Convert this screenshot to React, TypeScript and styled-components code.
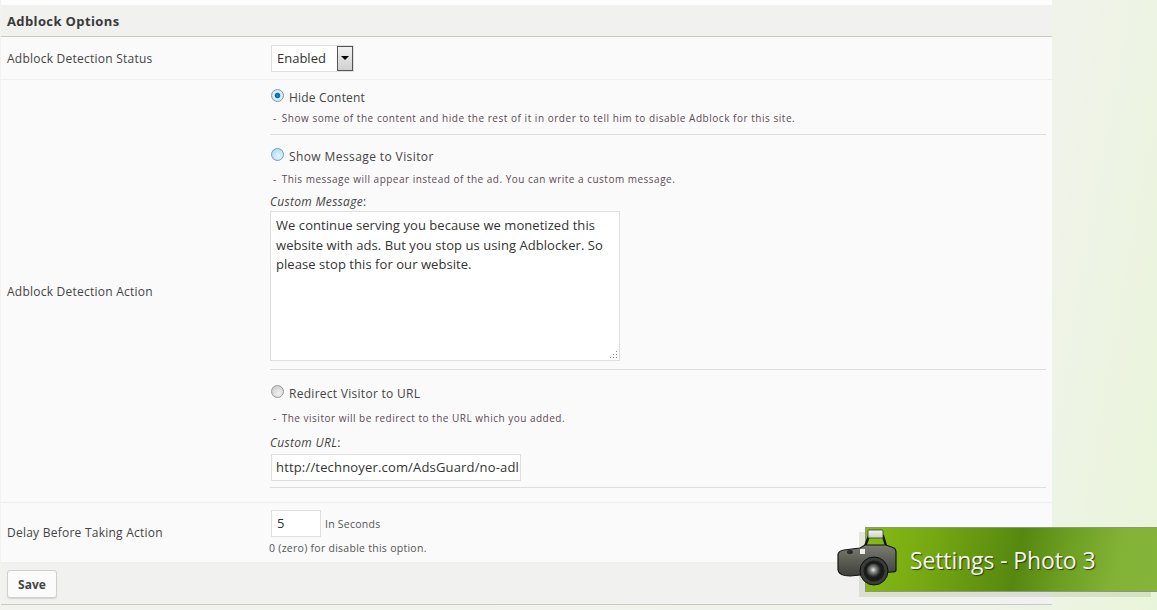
import React from "react";
import styled, { createGlobalStyle } from "styled-components";

const GlobalStyle = createGlobalStyle`
    html, body {
        margin: 0;
        height: 100%;
        overflow: hidden;
    }

    body {
        font-family: "Open Sans", "Noto Sans", sans-serif;
        font-size: 12px;
        color: #333;
        background: linear-gradient(100deg, #f2f3ef 0%, #f0f3ea 85%, #e9f5da 100%);
    }
`;

const Page = styled.div`
    position: relative;
    height: 610px;
    overflow: hidden;
`;

const Panel = styled.div`
    width: 1051px;
    margin-left: 1px;
    padding-top: 5px;
    background: linear-gradient(#fdfdfd, #fdfdfd) top / 100% 5px no-repeat;
`;

const Heading = styled.h3`
    margin: 0;
    height: 32px;
    box-sizing: border-box;
    padding: 1px 6px 0;
    font-size: 13px;
    line-height: 30px;
    font-weight: 700;
    letter-spacing: 0.38px;
    color: #3a3a3a;
    background: #f1f1ef;
    border-bottom: 1px solid #c9c9c5;
`;

const Row = styled.div<{ $height: number }>`
    display: grid;
    grid-template-columns: 269px 1fr;
    height: ${(p) => p.$height}px;
    box-sizing: border-box;
    background: #fafafa;
    border-bottom: 1px solid #efefef;
`;

const RowLabel = styled.div`
    display: flex;
    align-items: center;
    padding-left: 6px;
    font-size: 12px;
    letter-spacing: 0.24px;
    color: #444;
`;

const RowBody = styled.div`
    padding-right: 6px;
`;

const CenterBody = styled(RowBody)`
    display: flex;
    align-items: center;
`;

const Select = styled.div`
    display: flex;
    align-items: center;
    width: 83px;
    height: 27px;
    margin-left: 1px;
    box-sizing: border-box;
    border: 1px solid #dfdfdf;
    background: #fff;
    font-size: 13px;
    color: #333;
`;

const SelectText = styled.span`
    flex: 1;
    padding-left: 5px;
`;

const SelectArrow = styled.span`
    display: flex;
    align-items: center;
    justify-content: center;
    width: 16px;
    height: 25px;
    box-sizing: border-box;
    border: 1px solid #555;
    background: linear-gradient(#f2f2f2, #cfcfcf);

    &::after {
        content: "";
        border: 4px solid transparent;
        border-top: 4px solid #000;
        border-bottom: 0;
    }
`;

const OptionBlock = styled.div<{ $height: number; $line?: boolean }>`
    height: ${(p) => p.$height}px;
    box-sizing: border-box;
    border-bottom: ${(p) => (p.$line ? "1px solid #dedede" : "0")};
`;

const RadioLine = styled.div<{ $top: number; $spacing: number }>`
    display: flex;
    align-items: center;
    gap: 5px;
    padding-top: ${(p) => p.$top}px;
    padding-left: 1px;
    height: 18px;
    font-size: 12px;
    letter-spacing: ${(p) => p.$spacing}px;
    color: #444;
`;

const RadioDot = styled.span<{ $tone: "on" | "blue" | "grey" }>`
    display: block;
    width: 13px;
    height: 13px;
    margin-top: -3px;
    border-radius: 50%;
    box-sizing: border-box;
    border: 1px solid ${(p) => (p.$tone === "grey" ? "#9a9a9a" : "#6f9fbd")};
    background: ${(p) =>
        p.$tone === "on"
            ? "radial-gradient(circle, #0a8fe0 0, #0468a8 28%, #e6f2f9 42%, #bcd9ea 100%)"
            : p.$tone === "blue"
              ? "radial-gradient(circle at 60% 65%, #e6f5fd 0, #b5def5 70%, #8fc4e2 100%)"
              : "radial-gradient(circle at 60% 65%, #f2f2f2 0, #d2d2d2 70%, #b0b0b0 100%)"};
`;

const Hint = styled.div<{ $top: number; $spacing: number }>`
    display: flex;
    gap: 5px;
    margin-top: ${(p) => p.$top}px;
    padding-left: 3px;
    font-size: 10px;
    line-height: 14px;
    letter-spacing: ${(p) => p.$spacing}px;
    color: #5b4a55;
`;

const FieldLabel = styled.div<{ $top: number }>`
    margin-top: ${(p) => p.$top}px;
    font-size: 12px;
    line-height: 16px;
    letter-spacing: 0.3px;
    color: #444;

    em {
        font-style: italic;
    }
`;

const TextArea = styled.div`
    position: relative;
    width: 350px;
    height: 150px;
    margin-top: 1px;
    box-sizing: border-box;
    padding: 4px 5px;
    border: 1px solid #dfdfdf;
    background: #fff;
    font-size: 13px;
    line-height: 19.5px;
    letter-spacing: 0.06px;
    color: #333;
`;

const Grip = styled.svg`
    position: absolute;
    right: 1px;
    bottom: 1px;
`;

const UrlInput = styled.div`
    width: 250px;
    height: 27px;
    margin: 3px 0 0 1px;
    box-sizing: border-box;
    padding-left: 4px;
    border: 1px solid #dfdfdf;
    background: #fff;
    font-size: 13px;
    line-height: 25px;
    letter-spacing: 0.17px;
    color: #333;
    white-space: nowrap;
    overflow: hidden;
`;

const DelayLine = styled.div`
    display: flex;
    align-items: center;
    gap: 4px;
    padding: 7px 0 0 1px;
    font-size: 10.5px;
    letter-spacing: 0.25px;
    color: #555;
`;

const NumberInput = styled.div`
    width: 50px;
    height: 27px;
    box-sizing: border-box;
    padding-left: 5px;
    border: 1px solid #dfdfdf;
    background: #fff;
    font-size: 13px;
    line-height: 25px;
    color: #333;
`;

const DelayHint = styled.div`
    margin: 4px 0 0 -1px;
    font-size: 10.5px;
    line-height: 14px;
    letter-spacing: 0.27px;
    color: #555;
`;

const Footer = styled.div`
    height: 42px;
    box-sizing: border-box;
    padding: 7px 6px 0;
    background: #f1f1ef;
    border-bottom: 1px solid #c9c9c5;
`;

const SaveButton = styled.button`
    display: block;
    width: 50px;
    height: 28px;
    padding: 0;
    border: 1px solid #cfcfcf;
    border-radius: 3px;
    background: #fbfbfb;
    box-shadow: 0 1px 1px rgba(0, 0, 0, 0.12);
    font-family: inherit;
    font-size: 12px;
    font-weight: 700;
    color: #444;
`;

const Ribbon = styled.div`
    position: absolute;
    left: 865px;
    top: 527px;
    width: 292px;
    height: 65px;
    box-sizing: border-box;
    padding-left: 44px;
    border-top: 1px solid #8a9a78;
    border-bottom: 1px solid #8a9a78;
    border-left: 1px solid #8a9a78;
    background: linear-gradient(102deg, #85bb14 0%, #78ab12 20%, #568810 52%, #6c9f22 68%, #82b236 85%, #85b43a 100%);
    box-shadow: -6px 5px 0 rgba(130, 150, 100, 0.2);
    font-size: 23px;
    line-height: 64px;
    letter-spacing: -0.12px;
    color: #f1f6e6;
    text-shadow: 1px 1px 1px #2c3c12;
`;

const Camera = styled.svg`
    position: absolute;
    left: 832px;
    top: 522px;
`;

const CameraIcon = () => (
    <Camera width="72" height="70" viewBox="0 0 72 70">
        <defs>
            <linearGradient id="camBody" x1="0" y1="0" x2="0" y2="1">
                <stop offset="0" stopColor="#7b7d75" />
                <stop offset="0.5" stopColor="#5c5e56" />
                <stop offset="1" stopColor="#3e3f3a" />
            </linearGradient>
            <radialGradient id="camLens" cx="0.45" cy="0.42" r="0.6">
                <stop offset="0" stopColor="#ecece8" />
                <stop offset="0.3" stopColor="#8a8c86" />
                <stop offset="0.75" stopColor="#2a2b29" />
                <stop offset="1" stopColor="#111210" />
            </radialGradient>
            <linearGradient id="camFlash" x1="0" y1="0" x2="0" y2="1">
                <stop offset="0" stopColor="#f4f6f0" />
                <stop offset="1" stopColor="#c9cdc2" />
            </linearGradient>
        </defs>
        <path d="M32 27 L37 14 H51 L55 27 Z" fill="none" stroke="#131412" strokeWidth="2.4" />
        <rect x="36" y="8" width="15" height="8" rx="1" fill="url(#camFlash)" stroke="#3a3b37" strokeWidth="0.8" />
        <path d="M6 33 Q6 29 12 28 L28 26 L33 23 H54 L62 26 Q64 27 64 30 V48 Q64 50 60 50 L18 54 Q7 54 6 48 Z" fill="url(#camBody)" stroke="#141513" strokeWidth="1.2" />
        <ellipse cx="18" cy="30" rx="3" ry="2" fill="#2b2c2a" />
        <rect x="28" y="27" width="5" height="5" fill="#eef0ea" />
        <circle cx="42" cy="49" r="14" fill="#3a3c3a" stroke="#0f100f" strokeWidth="1" />
        <circle cx="42" cy="49" r="10.5" fill="#1a1b1a" />
        <circle cx="42" cy="49" r="7.5" fill="url(#camLens)" />
    </Camera>
);

export default function App() {
    return (
        <Page>
            <GlobalStyle />
            <Panel>
                <Heading>Adblock Options</Heading>

                <Row $height={43}>
                    <RowLabel>Adblock Detection Status</RowLabel>
                    <CenterBody>
                        <Select>
                            <SelectText>Enabled</SelectText>
                            <SelectArrow />
                        </Select>
                    </CenterBody>
                </Row>

                <Row $height={423}>
                    <RowLabel>Adblock Detection Action</RowLabel>
                    <RowBody>
                        <OptionBlock $height={55} $line>
                            <RadioLine $top={8} $spacing={0.18}>
                                <RadioDot $tone="on" />
                                Hide Content
                            </RadioLine>
                            <Hint $top={5} $spacing={0.53}>
                                <span>-</span>
                                <span>Show some of the content and hide the rest of it in order to tell him to disable Adblock for this site.</span>
                            </Hint>
                        </OptionBlock>
                        <OptionBlock $height={235} $line>
                            <RadioLine $top={12} $spacing={0.4}>
                                <RadioDot $tone="blue" />
                                Show Message to Visitor
                            </RadioLine>
                            <Hint $top={7} $spacing={0.49}>
                                <span>-</span>
                                <span>This message will appear instead of the ad. You can write a custom message.</span>
                            </Hint>
                            <FieldLabel $top={8}>
                                <em>Custom Message</em>:
                            </FieldLabel>
                            <TextArea>
                                We continue serving you because we monetized this website with ads. But you stop us using Adblocker. So please stop this for our website.
                                <Grip width="9" height="9" viewBox="0 0 9 9">
                                    <path d="M7 1h1v1H7zM4 4h1v1H4zM7 4h1v1H7zM1 7h1v1H1zM4 7h1v1H4zM7 7h1v1H7z" fill="#8a8a8a" />
                                </Grip>
                            </TextArea>
                        </OptionBlock>
                        <OptionBlock $height={118} $line>
                            <RadioLine $top={14} $spacing={0.28}>
                                <RadioDot $tone="grey" />
                                Redirect Visitor to URL
                            </RadioLine>
                            <Hint $top={9} $spacing={0.5}>
                                <span>-</span>
                                <span>The visitor will be redirect to the URL which you added.</span>
                            </Hint>
                            <FieldLabel $top={10}>
                                <em>Custom URL</em>:
                            </FieldLabel>
                            <UrlInput>http://technoyer.com/AdsGuard/no-adl</UrlInput>
                        </OptionBlock>
                    </RowBody>
                </Row>

                <Row $height={60}>
                    <RowLabel>Delay Before Taking Action</RowLabel>
                    <RowBody>
                        <DelayLine>
                            <NumberInput>5</NumberInput>
                            In Seconds
                        </DelayLine>
                        <DelayHint>0 (zero) for disable this option.</DelayHint>
                    </RowBody>
                </Row>

                <Footer>
                    <SaveButton>Save</SaveButton>
                </Footer>
            </Panel>
            <Ribbon>Settings - Photo 3</Ribbon>
            <CameraIcon />
        </Page>
    );
}
